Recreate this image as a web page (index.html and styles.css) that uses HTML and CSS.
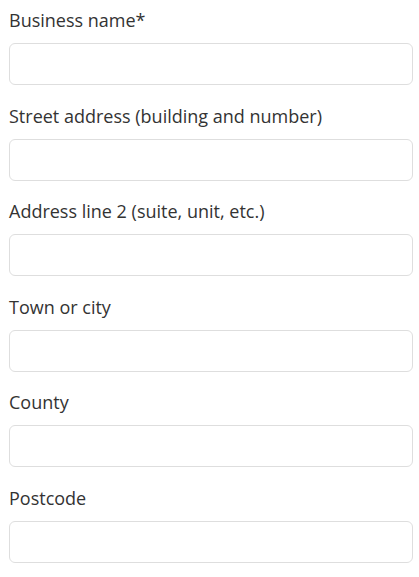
FILE: index.html
```html
<!DOCTYPE html>
<html lang="en">
<head>
<meta charset="utf-8">
<link rel="stylesheet" href="styles.css">
</head>
<body>
<form class="form">
  <div class="field">
    <label class="label" for="f1">Business name*</label>
    <input class="input" id="f1" type="text">
  </div>
  <div class="field">
    <label class="label" for="f2">Street address (building and number)</label>
    <input class="input" id="f2" type="text">
  </div>
  <div class="field">
    <label class="label" for="f3">Address line 2 (suite, unit, etc.)</label>
    <input class="input" id="f3" type="text">
  </div>
  <div class="field">
    <label class="label" for="f4">Town or city</label>
    <input class="input" id="f4" type="text">
  </div>
  <div class="field">
    <label class="label" for="f5">County</label>
    <input class="input" id="f5" type="text">
  </div>
  <div class="field">
    <label class="label" for="f6">Postcode</label>
    <input class="input" id="f6" type="text">
  </div>
</form>
</body>
</html>
```
FILE: styles.css
```css
html, body {
  margin: 0;
  padding: 0;
  background: #ffffff;
}
body {
  font-family: "Open Sans", "Noto Sans", sans-serif;
  color: #333333;
}
.form {
  display: flex;
  flex-direction: column;
  gap: 18.6px;
  padding: 8px 6px 0 9px;
}
.field {
  display: flex;
  flex-direction: column;
}
.label {
  font-size: 18px;
  line-height: 24px;
  margin-bottom: 11px;
}
.input {
  box-sizing: border-box;
  width: 100%;
  height: 42px;
  margin: 0;
  border: 1px solid #dedede;
  border-radius: 6px;
  background: #ffffff;
  font-family: inherit;
  font-size: 16px;
  padding: 0 12px;
  outline: none;
}
```
